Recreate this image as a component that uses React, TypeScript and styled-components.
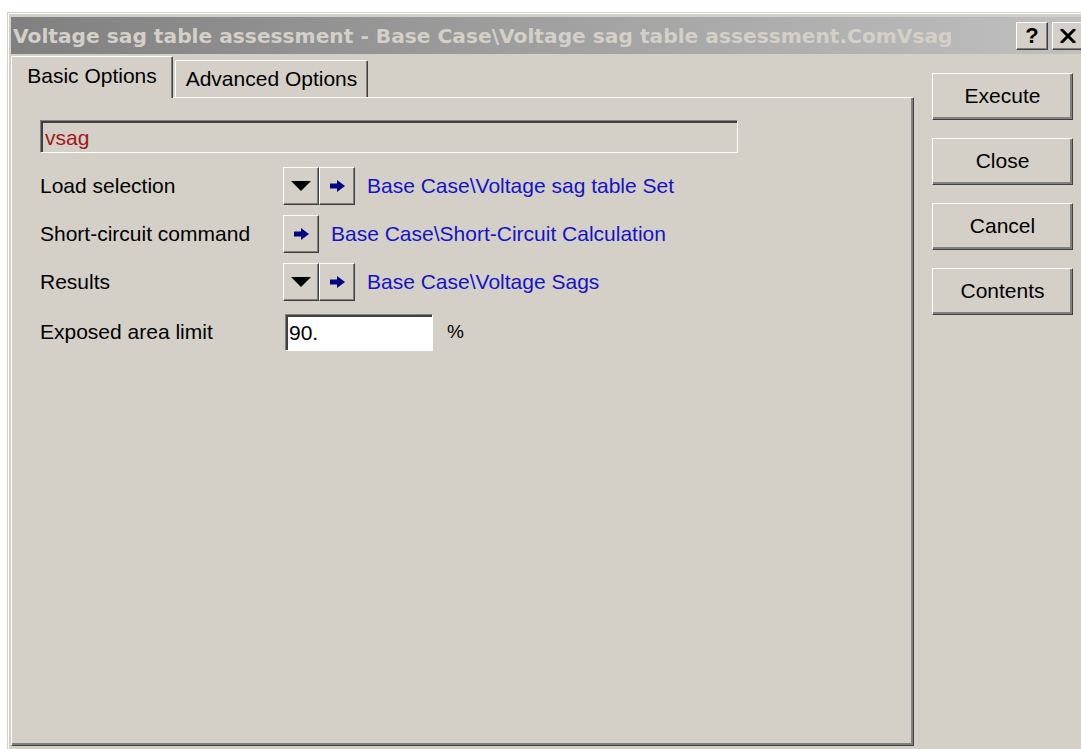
import React from "react";
import styled, { createGlobalStyle } from "styled-components";

const GlobalStyle = createGlobalStyle`
  html, body {
    margin: 0;
    padding: 0;
    background: #ffffff;
    overflow: hidden;
  }
  body {
    width: 1081px;
    height: 749px;
  }
`;

const FACE = "#d4d0c8";
const UI_FONT = `"Liberation Sans", Arial, sans-serif`;

const Window = styled.div`
  box-sizing: border-box;
  margin: 12px 0 0 7px;
  width: 1080px;
  height: 745px;
  background: ${FACE};
  border-top: 1px solid ${FACE};
  border-left: 1px solid ${FACE};
  box-shadow: inset 1px 1px 0 #ffffff;
  padding: 4px 3px 0 3px;
  display: flex;
  flex-direction: column;
`;

const TitleBar = styled.div`
  height: 37px;
  flex: none;
  display: flex;
  align-items: center;
  background: linear-gradient(to right, #808080, #c0c0c0);
  padding-left: 2px;
`;

const TitleText = styled.div`
  flex: 1;
  font-family: "DejaVu Sans", Verdana, sans-serif;
  font-weight: bold;
  font-size: 20.2px;
  color: ${FACE};
  white-space: nowrap;
  overflow: hidden;
`;

const CaptionButtons = styled.div`
  display: flex;
  gap: 4px;
`;

const CaptionButton = styled.div`
  box-sizing: border-box;
  width: 32px;
  height: 28px;
  background: ${FACE};
  border: 1px solid;
  border-color: #ffffff #404040 #404040 #ffffff;
  box-shadow: inset -1px -1px 0 #808080;
  display: flex;
  align-items: center;
  justify-content: center;
  font-family: ${UI_FONT};
  font-weight: bold;
  font-size: 22px;
  color: #000;
`;

const Body = styled.div`
  flex: 1;
  display: flex;
  gap: 18px;
`;

const TabArea = styled.div`
  width: 903px;
  display: flex;
  flex-direction: column;
`;

const TabStrip = styled.div`
  height: 43px;
  display: flex;
  align-items: flex-end;
`;

const Tab = styled.div<{ $active?: boolean; $width: number }>`
  box-sizing: border-box;
  width: ${(p) => p.$width}px;
  height: ${(p) => (p.$active ? 42 : 37)}px;
  margin-left: ${(p) => (p.$active ? 0 : 2)}px;
  margin-bottom: ${(p) => (p.$active ? -1 : 0)}px;
  position: relative;
  z-index: ${(p) => (p.$active ? 1 : 0)};
  background: ${FACE};
  border-top: 1px solid #ffffff;
  border-left: 1px solid #ffffff;
  border-right: 1px solid #404040;
  box-shadow: inset -1px 0 0 #808080;
  border-radius: 2px 2px 0 0;
  display: flex;
  align-items: center;
  justify-content: center;
  padding-bottom: ${(p) => (p.$active ? 3 : 0)}px;
  font-family: ${UI_FONT};
  font-size: 21px;
  color: #000;
`;

const Panel = styled.div`
  box-sizing: border-box;
  height: 649px;
  border-top: 1px solid #ffffff;
  border-left: 1px solid #ffffff;
  border-right: 1px solid #404040;
  border-bottom: 1px solid #404040;
  box-shadow: inset -2px -2px 0 #808080;
  padding: 22px 0 0 28px;
  display: flex;
  flex-direction: column;
  font-family: ${UI_FONT};
  font-size: 21px;
`;

const NameField = styled.div`
  box-sizing: border-box;
  width: 698px;
  height: 33px;
  border: 1px solid;
  border-color: #808080 #ffffff #ffffff #808080;
  box-shadow: inset 2px 2px 0 #404040;
  padding: 2px 0 0 4px;
  display: flex;
  align-items: center;
  color: #a01818;
  margin-bottom: 14px;
`;

const Rows = styled.div`
  display: flex;
  flex-direction: column;
  gap: 10px;
`;

const Row = styled.div`
  height: 38px;
  display: flex;
  align-items: center;
`;

const LimitRow = styled(Row)`
  margin-top: 2px;
`;

const Label = styled.div`
  width: 243px;
  flex: none;
  color: #000;
`;

const SmallButton = styled.div`
  box-sizing: border-box;
  width: 36px;
  height: 38px;
  background: ${FACE};
  border: 1px solid;
  border-color: #ffffff #404040 #404040 #ffffff;
  box-shadow: inset -1px -1px 0 #808080;
  display: flex;
  align-items: center;
  justify-content: center;
`;

const Link = styled.div`
  margin-left: 12px;
  color: #1414c4;
  white-space: nowrap;
`;

const NumberField = styled.div`
  box-sizing: border-box;
  width: 148px;
  height: 37px;
  background: #ffffff;
  border: 1px solid;
  border-color: #808080 #ffffff #ffffff #808080;
  box-shadow: inset 2px 2px 0 #404040;
  padding: 2px 0 0 3px;
  display: flex;
  align-items: center;
  color: #000;
  margin-left: 2px;
`;

const Unit = styled.div`
  margin-left: 14px;
  color: #000;
  font-size: 19px;
`;

const ButtonColumn = styled.div`
  padding-top: 19px;
  display: flex;
  flex-direction: column;
  gap: 18px;
`;

const CommandButton = styled.div`
  box-sizing: border-box;
  width: 141px;
  height: 47px;
  background: ${FACE};
  border: 1px solid;
  border-color: #ffffff #404040 #404040 #ffffff;
  box-shadow: inset -2px -2px 0 #808080;
  display: flex;
  align-items: center;
  justify-content: center;
  font-family: ${UI_FONT};
  font-size: 21px;
  color: #000;
  padding-bottom: 2px;
`;

const DownIcon = () => (
  <svg width="20" height="10" viewBox="0 0 20 10">
    <polygon points="0,0 20,0 10,10" fill="#000" />
  </svg>
);

const JumpIcon = () => (
  <svg width="15" height="12" viewBox="0 0 15 12">
    <rect x="0" y="3.5" width="8" height="5" fill="#000080" />
    <polygon points="7,0 15,6 7,12" fill="#000080" />
  </svg>
);

const CloseIcon = () => (
  <svg width="16" height="14" viewBox="0 0 16 14">
    <path d="M1 0 L15 14 M15 0 L1 14" stroke="#000" strokeWidth="3" />
  </svg>
);

export default function App() {
  return (
    <>
      <GlobalStyle />
      <Window>
        <TitleBar>
          <TitleText>
            Voltage sag table assessment - Base Case\Voltage sag table assessment.ComVsag
          </TitleText>
          <CaptionButtons>
            <CaptionButton>?</CaptionButton>
            <CaptionButton>
              <CloseIcon />
            </CaptionButton>
          </CaptionButtons>
        </TitleBar>
        <Body>
          <TabArea>
            <TabStrip>
              <Tab $active $width={162}>Basic Options</Tab>
              <Tab $width={193}>Advanced Options</Tab>
            </TabStrip>
            <Panel>
              <NameField>vsag</NameField>
              <Rows>
                <Row>
                  <Label>Load selection</Label>
                  <SmallButton>
                    <DownIcon />
                  </SmallButton>
                  <SmallButton>
                    <JumpIcon />
                  </SmallButton>
                  <Link>Base Case\Voltage sag table Set</Link>
                </Row>
                <Row>
                  <Label>Short-circuit command</Label>
                  <SmallButton>
                    <JumpIcon />
                  </SmallButton>
                  <Link>Base Case\Short-Circuit Calculation</Link>
                </Row>
                <Row>
                  <Label>Results</Label>
                  <SmallButton>
                    <DownIcon />
                  </SmallButton>
                  <SmallButton>
                    <JumpIcon />
                  </SmallButton>
                  <Link>Base Case\Voltage Sags</Link>
                </Row>
                <LimitRow>
                  <Label>Exposed area limit</Label>
                  <NumberField>90.</NumberField>
                  <Unit>%</Unit>
                </LimitRow>
              </Rows>
            </Panel>
          </TabArea>
          <ButtonColumn>
            <CommandButton>Execute</CommandButton>
            <CommandButton>Close</CommandButton>
            <CommandButton>Cancel</CommandButton>
            <CommandButton>Contents</CommandButton>
          </ButtonColumn>
        </Body>
      </Window>
    </>
  );
}
